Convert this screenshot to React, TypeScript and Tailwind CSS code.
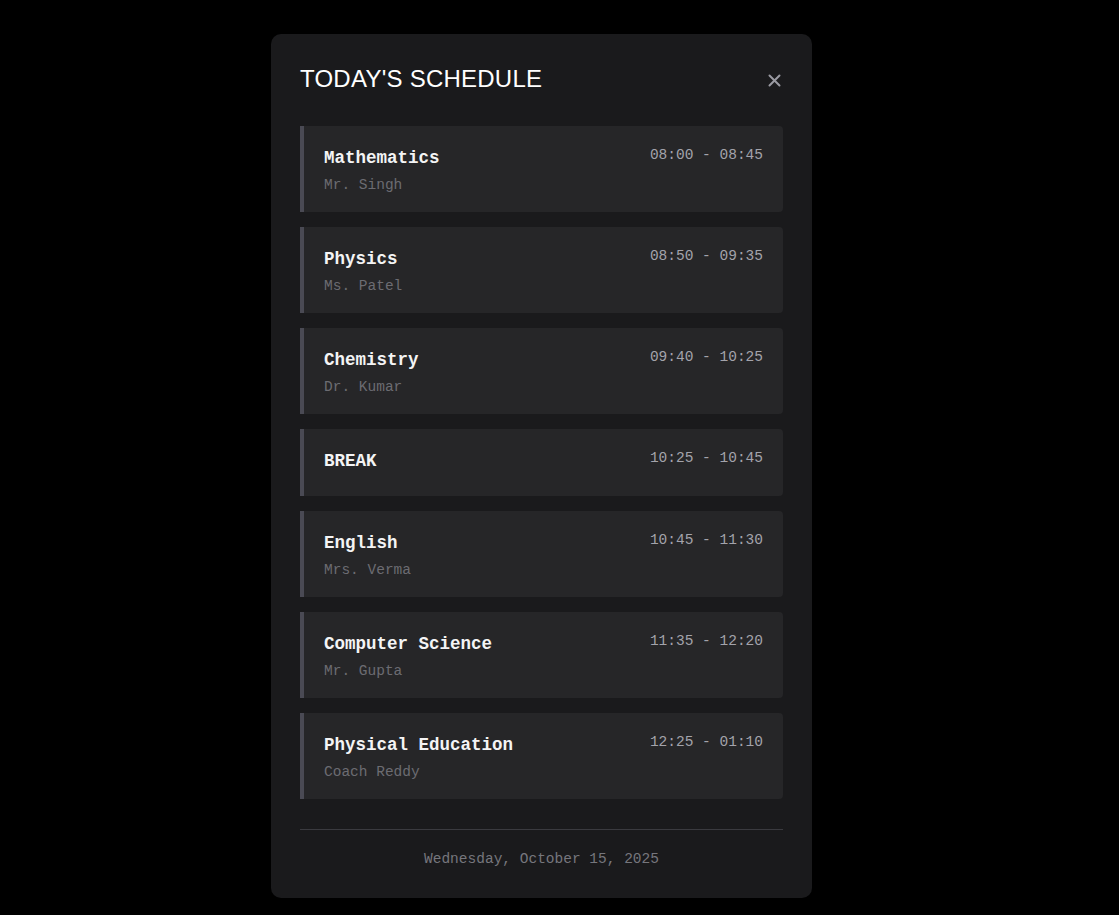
import React from "react";

type Slot = { subject: string; teacher?: string; time: string };

const slots: Slot[] = [
  { subject: "Mathematics", teacher: "Mr. Singh", time: "08:00 - 08:45" },
  { subject: "Physics", teacher: "Ms. Patel", time: "08:50 - 09:35" },
  { subject: "Chemistry", teacher: "Dr. Kumar", time: "09:40 - 10:25" },
  { subject: "BREAK", time: "10:25 - 10:45" },
  { subject: "English", teacher: "Mrs. Verma", time: "10:45 - 11:30" },
  { subject: "Computer Science", teacher: "Mr. Gupta", time: "11:35 - 12:20" },
  { subject: "Physical Education", teacher: "Coach Reddy", time: "12:25 - 01:10" },
];

const mono = { fontFamily: '"Liberation Mono", "DejaVu Sans Mono", monospace' };

function SlotCard({ slot }: { slot: Slot }) {
  return (
    <div
      className="flex min-h-[67px] justify-between rounded-r border-l-4 border-[#4a4a54] bg-[#262628] pb-[17px] pl-5 pr-5 pt-[19px]"
      style={mono}
    >
      <div className="flex flex-col gap-1">
        <div className="text-[17.5px] font-bold leading-[26px] text-[#f4f4f5]">{slot.subject}</div>
        {slot.teacher && <div className="text-[14.5px] leading-5 text-[#6c6c72]">{slot.teacher}</div>}
      </div>
      <div className="text-[14.5px] leading-5 text-[#a3a3ab]">{slot.time}</div>
    </div>
  );
}

export default function App() {
  return (
    <div className="flex min-h-screen justify-center bg-black pr-[36px] pt-[34px]">
      <div className="h-fit w-[541px] rounded-[10px] bg-[#1a1a1c] px-[29px] pb-[29px] pt-[29px]">
        <div className="mb-[31px] flex items-center justify-between">
          <h1
            className="text-[24px] leading-8 tracking-[0.01em] text-white"
            style={{ fontFamily: '"Liberation Sans", Arial, sans-serif' }}
          >
            TODAY&apos;S SCHEDULE
          </h1>
          <button className="mr-[2px] mt-[2px] text-[#9a9aa2]">
            <svg width="13" height="13" viewBox="0 0 13 13" fill="none" stroke="currentColor" strokeWidth="2" strokeLinecap="round">
              <path d="M1.5 1.5l10 10M11.5 1.5l-10 10" />
            </svg>
          </button>
        </div>
        <div className="flex flex-col gap-[15px]">
          {slots.map((s) => (
            <SlotCard key={s.subject} slot={s} />
          ))}
        </div>
        <div
          className="mt-[30px] border-t border-[#3a3a3f] pt-[19px] text-center text-[14.5px] leading-5 text-[#76767c]"
          style={mono}
        >
          Wednesday, October 15, 2025
        </div>
      </div>
    </div>
  );
}
